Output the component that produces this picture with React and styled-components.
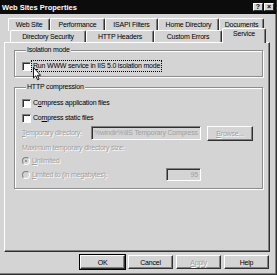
import React from 'react';
import styled, { createGlobalStyle } from 'styled-components';

const GlobalStyle = createGlobalStyle`
  html, body {
    margin: 0;
    padding: 0;
    background: #d4d4d4;
  }
  body {
    font-family: 'Liberation Sans', Arial, sans-serif;
    font-size: 7px;
    letter-spacing: -0.2px;
    color: #000;
  }
`;

const Window = styled.div`
  position: relative;
  width: 277px;
  height: 275px;
  box-sizing: border-box;
  background: #d4d4d4;
  display: flex;
  flex-direction: column;
  border-right: 1px solid #303030;
  border-bottom: 1px solid #303030;
  box-shadow: inset -1px -1px 0 #808080;
  overflow: hidden;
`;

const TitleBar = styled.div`
  height: 14px;
  flex: none;
  background: #0c0c0c;
  display: flex;
  align-items: center;
  padding: 0 2px 0 2px;
  color: #fff;
  font-weight: bold;
  font-size: 7.5px;
  letter-spacing: 0;
`;

const Title = styled.span`
  flex: 1;
  line-height: 13px;
`;

const CaptionButton = styled.span`
  width: 10px;
  height: 8px;
  margin-left: 1px;
  box-sizing: border-box;
  background: #d4d4d4;
  border: 1px solid;
  border-color: #fff #303030 #303030 #fff;
  color: #000;
  font-size: 7px;
  line-height: 6px;
  text-align: center;
`;

const TabRow = styled.div`
  display: flex;
  height: ${p => p.$h}px;
  padding-left: ${p => p.$left}px;
  margin-top: ${p => p.$top}px;
  flex: none;
  position: relative;
  z-index: ${p => p.$z};
`;

const Tab = styled.div`
  width: ${p => p.$w}px;
  box-sizing: border-box;
  border-top: 1px solid #fff;
  border-left: 1px solid #fff;
  border-right: 1px solid #303030;
  box-shadow: inset -1px 0 0 #808080;
  border-radius: 2px 2px 0 0;
  background: #d4d4d4;
  text-align: center;
  line-height: ${p => p.$lh}px;
  ${p => p.$active && `
    margin-top: -2px;
    height: calc(100% + 3px);
    line-height: 10px;
    position: relative;
    z-index: 3;
  `}
`;

const Panel = styled.div`
  margin-left: 4px;
  width: 266px;
  height: 210px;
  box-sizing: border-box;
  flex: none;
  border: 1px solid;
  border-color: #fff #303030 #303030 #fff;
  box-shadow: inset -1px -1px 0 #808080;
  padding: 3px 6px 0 9px;
  display: flex;
  flex-direction: column;
`;

const Group = styled.fieldset`
  margin: ${p => p.$mt || 0}px 0 0 0;
  padding: ${p => p.$pad};
  border: 1px solid #8c8c8c;
  box-shadow: inset 1px 1px 0 #fff, 1px 1px 0 #fff;
  min-width: 0;
  display: flex;
  flex-direction: column;
`;

const Legend = styled.legend`
  padding: 0 1px;
  margin-left: 4px;
  line-height: 8px;
  background: #d4d4d4;
`;

const Row = styled.div`
  position: relative;
  display: flex;
  align-items: center;
  height: ${p => p.$h || 10}px;
  margin-top: ${p => p.$mt || 0}px;
`;

const CheckBox = styled.span`
  width: 9px;
  height: 9px;
  flex: none;
  box-sizing: border-box;
  background: #fff;
  border: 1px solid;
  border-color: #808080 #fff #fff #808080;
  box-shadow: inset 1px 1px 0 #303030;
  margin-right: 2px;
`;

const Radio = styled.span`
  position: relative;
  width: 8px;
  height: 8px;
  flex: none;
  box-sizing: border-box;
  border-radius: 50%;
  border: 1px solid;
  border-color: #808080 #fff #fff #808080;
  background: #d4d4d4;
  margin-right: 2px;

  &::after {
    content: '';
    display: ${p => (p.$checked ? 'block' : 'none')};
    position: absolute;
    left: 2px;
    top: 2px;
    width: 2px;
    height: 2px;
    border-radius: 50%;
    background: #808080;
  }
`;

const Label = styled.span`
  line-height: 10px;
  color: ${p => (p.$disabled ? '#a0a0a0' : '#000')};
  text-shadow: ${p => (p.$disabled ? '1px 1px 0 #fff' : 'none')};
  width: ${p => (p.$w ? `${p.$w}px` : 'auto')};
  flex: none;
  white-space: nowrap;
  ${p => p.$focus && `
    outline: 1px dotted #000;
    outline-offset: 0;
    padding: 0 1px;
    margin-left: -1px;
  `}
`;

const U = styled.span`
  text-decoration: underline;
`;

const TextBox = styled.div`
  width: ${p => p.$w}px;
  height: ${p => p.$h}px;
  box-sizing: border-box;
  border: 1px solid;
  border-color: #808080 #fff #fff #808080;
  box-shadow: inset 1px 1px 0 #303030;
  background: #d4d4d4;
  color: #a0a0a0;
  padding: 0 2px;
  line-height: ${p => p.$h - 2}px;
  overflow: hidden;
  white-space: nowrap;
  text-align: ${p => p.$align || 'left'};
  flex: none;
`;

const Button = styled.div`
  width: ${p => p.$w || 45}px;
  height: ${p => p.$h || 14}px;
  box-sizing: border-box;
  border: 1px solid;
  border-color: #fff #303030 #303030 #fff;
  box-shadow: inset -1px -1px 0 #808080;
  ${p => p.$default && `
    outline: 1px solid #000;
    outline-offset: 0;
  `}
  display: flex;
  align-items: center;
  justify-content: center;
  color: ${p => (p.$disabled ? '#a0a0a0' : '#000')};
  text-shadow: ${p => (p.$disabled ? '1px 1px 0 #fff' : 'none')};
  margin-left: ${p => p.$ml || 0}px;
  flex: none;
`;

const Footer = styled.div`
  display: flex;
  justify-content: flex-end;
  gap: 3px;
  padding-right: 7px;
  margin-top: 3px;
`;

const Cursor = styled.svg`
  position: absolute;
  left: 11px;
  top: 6px;
  width: 9px;
  height: 14px;
`;

const rowOne = [
  ['Web Site', 42],
  ['Performance', 55],
  ['ISAPI Filters', 53],
  ['Home Directory', 61],
  ['Documents', 45]
];

const rowTwo = [
  ['Directory Security', 76],
  ['HTTP Headers', 68],
  ['Custom Errors', 68],
  ['Service', 44, true]
];

export default function App() {
  return (
    <>
      <GlobalStyle />
      <Window>
        <TitleBar>
          <Title>Web Sites Properties</Title>
          <CaptionButton>?</CaptionButton>
          <CaptionButton>×</CaptionButton>
        </TitleBar>

        <TabRow $h={13} $left={8} $top={4} $z={1}>
          {rowOne.map(([name, w]) => (
            <Tab key={name} $w={w} $lh={12}>{name}</Tab>
          ))}
        </TabRow>
        <TabRow $h={12} $left={10} $top={-1} $z={2}>
          {rowTwo.map(([name, w, active]) => (
            <Tab key={name} $w={w} $lh={11} $active={active}>{name}</Tab>
          ))}
        </TabRow>

        <Panel>
          <Group $pad="7px 0 5px 7px">
            <Legend>Isolation mode</Legend>
            <Row>
              <CheckBox />
              <Label $focus>
                <U>R</U>un WWW service in IIS 5.0 isolation mode
              </Label>
              <Cursor viewBox="0 0 9 14">
                <path
                  d="M0.5 0.5 L0.5 11 L2.8 8.8 L4.6 12.8 L6.1 12.1 L4.4 8.3 L7.6 8.3 Z"
                  fill="#fff"
                  stroke="#000"
                  strokeWidth="0.9"
                  strokeLinejoin="round"
                />
              </Cursor>
            </Row>
          </Group>

          <Group $mt={6} $pad="7px 0 7px 7px">
            <Legend>HTTP compression</Legend>
            <Row>
              <CheckBox />
              <Label>C<U>o</U>mpress application files</Label>
            </Row>
            <Row $mt={5}>
              <CheckBox />
              <Label>Co<U>m</U>press static files</Label>
            </Row>
            <Row $h={14} $mt={3}>
              <Label $disabled $w={69}><U>T</U>emporary directory:</Label>
              <TextBox $w={110} $h={14}>%windir%\IIS Temporary Compress</TextBox>
              <Button $w={46} $h={15} $ml={6} $disabled><U>B</U>rowse...</Button>
            </Row>
            <Row $mt={3}>
              <Label $disabled>Maximum temporary directory size:</Label>
            </Row>
            <Row $mt={3}>
              <Radio $checked />
              <Label $disabled><U>U</U>nlimited</Label>
            </Row>
            <Row $h={13} $mt={2}>
              <Radio />
              <Label $disabled $w={134}><U>L</U>imited to (in megabytes):</Label>
              <TextBox $w={35} $h={13} $align="right">95</TextBox>
            </Row>
          </Group>
        </Panel>

        <Footer>
          <Button $default>OK</Button>
          <Button>Cancel</Button>
          <Button $disabled><U>A</U>pply</Button>
          <Button>Help</Button>
        </Footer>
      </Window>
    </>
  );
}
